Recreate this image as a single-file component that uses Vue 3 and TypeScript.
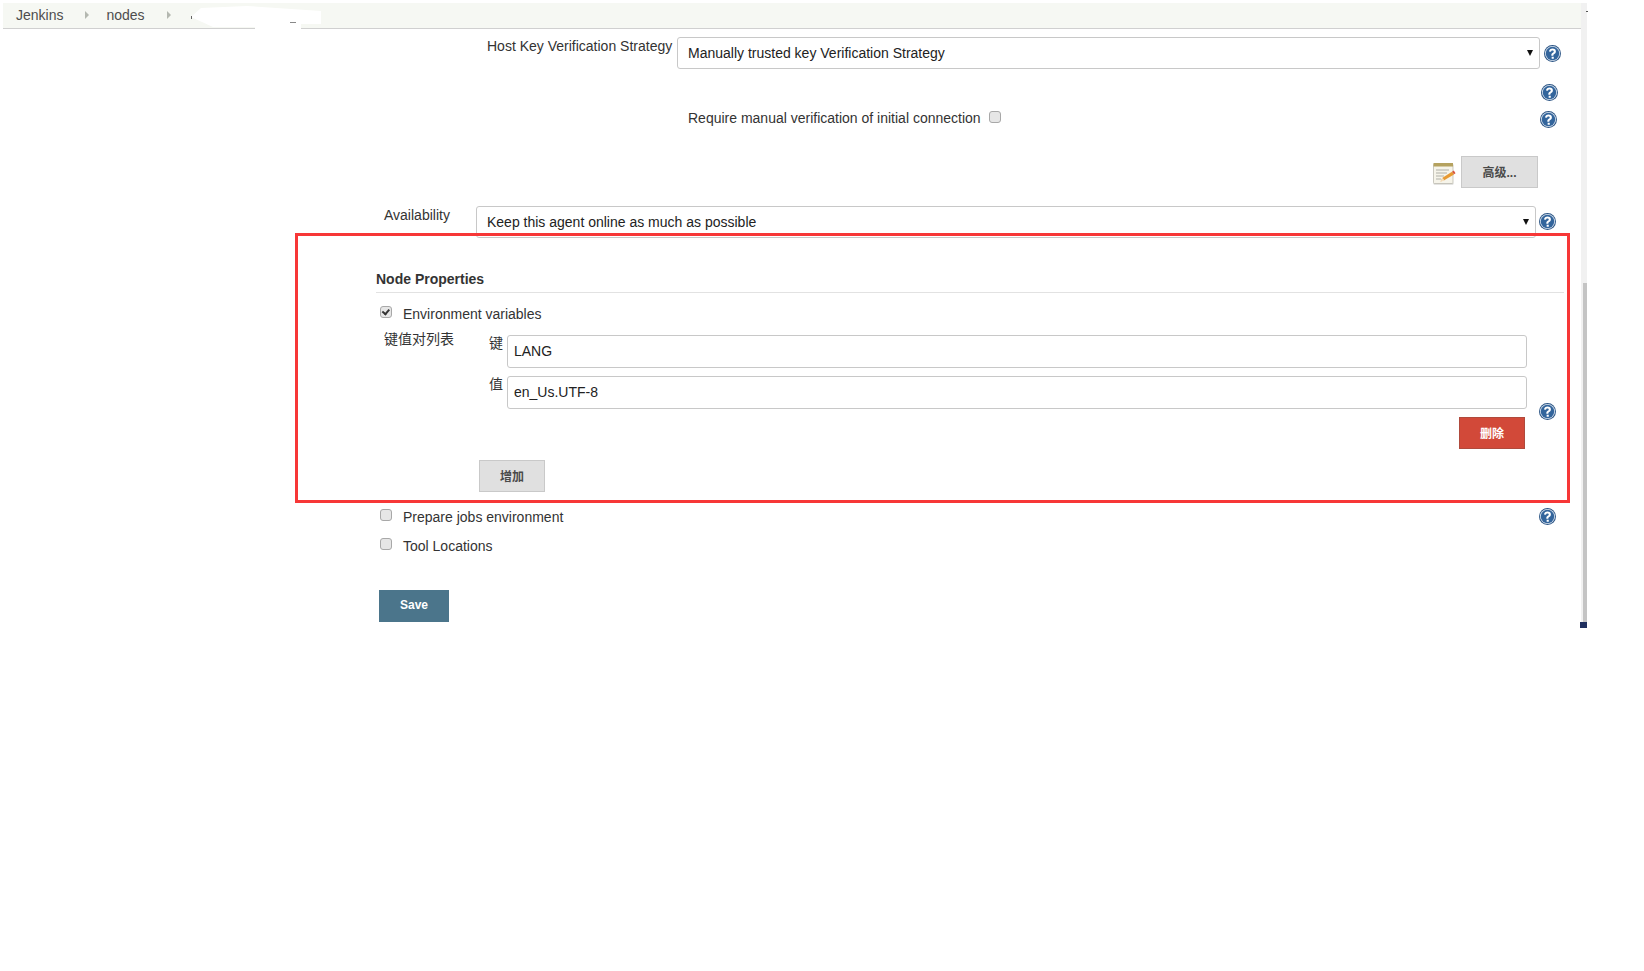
<script setup lang="ts">
const helpPath = 'M8.100 3.400c-1.900 0-3.200 1-3.400 2.700l1.900.2c.1-.8.600-1.200 1.400-1.200.7 0 1.200.4 1.200 1 0 .5-.3.8-1 1.300-.9.6-1.300 1.200-1.300 2.200v.5h1.900v-.3c0-.6.200-.9.900-1.400 1-.6 1.500-1.300 1.500-2.400 0-1.600-1.200-2.600-3.100-2.600zM7.200 11h2v1.900h-2z'
</script>

<template>
  <div class="page">
    <svg class="defs" aria-hidden="true">
      <symbol id="help-icon" viewBox="0 0 16 16">
        <circle cx="8" cy="8" r="8" fill="#2c5585" />
        <circle cx="8" cy="8" r="7.100" fill="#dce6f1" />
        <circle cx="8" cy="8" r="6.300" fill="#33659c" />
        <path :d="helpPath" fill="#fff" />
      </symbol>
    </svg>

    <nav class="crumbs">
      <span class="crumb">Jenkins</span>
      <i class="arrow first"></i>
      <span class="crumb">nodes</span>
      <i class="arrow"></i>
      <svg class="redacted" viewBox="0 0 140 30">
        <path d="M4 14L14 5 60 3 134 8V21H114V30H68V24H26z" fill="#fff" />
      </svg>
      <i class="tick"></i>
      <i class="tick second"></i>
    </nav>

    <main class="form">
      <div class="row host">
        <label class="host-label">Host Key Verification Strategy</label>
        <div class="select host-select">Manually trusted key Verification Strategy<i class="caret"></i></div>
        <svg class="help"><use href="#help-icon" /></svg>
      </div>
      <div class="row help-only">
        <svg class="help"><use href="#help-icon" /></svg>
      </div>
      <div class="row manual">
        <span class="manual-text">Require manual verification of initial connection</span>
        <i class="check"></i>
        <svg class="help"><use href="#help-icon" /></svg>
      </div>
      <div class="row advanced">
        <svg class="note" viewBox="0 0 24 24">
          <path d="M2 22.500h19l1-1H1z" fill="#c9c9c5" />
          <rect x="1.500" y="2" width="19.500" height="19.500" rx="1" fill="#f6f4ea" stroke="#b5b3a8" stroke-width=".7" />
          <rect x="1.500" y="1" width="19.500" height="3.500" fill="#b5a25f" />
          <path d="M4 8h13M4 11h11M4 14h8M4 17h5" stroke="#b0b0a8" stroke-width="1" />
          <path d="M8.500 19.500l2-3.800 9.500-6 2 2.800-9.800 5.700z" fill="#e79a33" />
          <path d="M8.500 19.500l2-3.800 2.200 3z" fill="#f4dfbd" />
          <path d="M20 9.700l1.800-1.100 1.700 2.700-1.500 1z" fill="#d8563c" />
        </svg>
        <button class="btn grey adv-btn">高级...</button>
      </div>
      <div class="row avail">
        <label class="avail-label">Availability</label>
        <div class="select avail-select">Keep this agent online as much as possible<i class="caret"></i></div>
        <svg class="help"><use href="#help-icon" /></svg>
      </div>

      <h3 class="section">Node Properties</h3>

      <div class="cb-row env"><i class="check checked"></i><span>Environment variables</span></div>

      <div class="kv">
        <div class="kv-title">键值对列表</div>
        <div class="kv-body">
          <div class="field"><label>键</label><div class="input">LANG</div></div>
          <div class="field"><label>值</label><div class="input">en_Us.UTF-8</div></div>
          <div class="del-row"><button class="btn red">删除</button></div>
          <button class="btn grey add-btn">增加</button>
        </div>
        <svg class="help kv-help"><use href="#help-icon" /></svg>
      </div>

      <div class="cb-row prep">
        <i class="check"></i><span>Prepare jobs environment</span>
        <svg class="help prep-help"><use href="#help-icon" /></svg>
      </div>
      <div class="cb-row tool"><i class="check"></i><span>Tool Locations</span></div>

      <button class="btn save">Save</button>
    </main>

    <div class="track"><div class="thumb"></div><div class="corner"></div></div>
    <div class="annotation"></div>
  </div>
</template>

<style>
html, body { margin: 0; background: #fff; }
</style>

<style scoped>
.page {
  position: relative;
  height: 971px;
  width: 1644px;
  overflow: hidden;
  font-family: "Liberation Sans", Arial, "Noto Sans CJK SC", sans-serif;
  font-size: 14px;
  color: #333;
  background: #fff;
}
.defs { position: absolute; width: 0; height: 0; }
.crumbs {
  position: relative;
  box-sizing: border-box;
  margin: 3px 0 0 3px;
  width: 1578px;
  height: 26px;
  display: flex;
  align-items: center;
  padding: 0 0 2px 13px;
  background: #f6f8f3;
  border-bottom: 1px solid #d0d0d0;
  color: #4d4d4d;
}
.crumb { line-height: 20px; }
.arrow {
  width: 0;
  height: 0;
  margin: 0 20px 0 22px;
  border-left: 4px solid #b4b8b0;
  border-top: 4px solid transparent;
  border-bottom: 4px solid transparent;
}
.arrow.first { margin-right: 17px; }
.redacted {
  position: absolute;
  left: 184px;
  top: 0;
  width: 140px;
  height: 30px;
}
.tick { position: absolute; left: 188px; top: 13px; width: 1px; height: 3px; background: #666; }
.tick.second { left: 287px; top: 19px; width: 6px; height: 1px; background: #888; }
.row { display: flex; align-items: flex-start; }
.select, .input {
  box-sizing: border-box;
  height: 32px;
  border: 1px solid #c8c8c8;
  border-radius: 3px;
  background: #fff;
  color: #222;
  line-height: 30px;
  position: relative;
}
.caret {
  position: absolute;
  right: 6px;
  top: 12px;
  width: 0;
  height: 0;
  border-top: 6px solid #111;
  border-left: 3.500px solid transparent;
  border-right: 3.500px solid transparent;
}
.help { width: 17px; height: 17px; flex: none; display: block; }
.host { height: 40px; margin-top: 8px; padding-left: 487px; }
.host-label { width: 185px; text-align: right; line-height: 18px; white-space: nowrap; }
.host-select { width: 863px; margin-left: 5px; padding-left: 10px; }
.host .help { margin: 8px 0 0 4px; }
.help-only { height: 17px; padding: 7px 0 0 1541px; }
.manual { height: 31px; padding-left: 688px; margin-top: 7px; }
.manual-text { line-height: 20px; width: 301px; white-space: nowrap; }
.check {
  box-sizing: border-box;
  width: 12px;
  height: 12px;
  flex: none;
  border: 1px solid #a8a8a8;
  border-radius: 3px;
  background: #e6e6e6;
  display: block;
  position: relative;
}
.manual .check { margin-top: 3px; }
.manual .help { margin: 3px 0 0 539px; }
.advanced { height: 32px; padding-left: 1432px; margin-top: 17px; align-items: center; }
.note { width: 24px; height: 24px; flex: none; margin-top: 3px; }
.btn {
  box-sizing: border-box;
  font-family: inherit;
  font-weight: 700;
  font-size: 12px;
  height: 32px;
  padding: 0 0 2px;
  border-radius: 0;
  display: block;
  text-align: center;
}
.grey { background: #e0e0e0; border: 1px solid #c9c9c9; color: #4a4a4a; }
.adv-btn { width: 77px; margin-left: 5px; }
.avail { margin-top: 18px; height: 32px; padding-left: 384px; }
.avail-label { width: 92px; line-height: 18px; }
.avail-select { width: 1060px; padding-left: 10px; }
.avail .help { margin: 7px 0 0 3px; }
.section {
  margin: 32px 0 0 376px;
  width: 1188px;
  height: 23px;
  box-sizing: border-box;
  border-bottom: 1px solid #e2e2e2;
  font-size: 14px;
  font-weight: 700;
  line-height: 18px;
  color: #333;
}
.cb-row { display: flex; padding-left: 380px; align-items: flex-start; }
.cb-row span { margin-left: 11px; line-height: 18px; }
.env { margin-top: 12px; height: 25px; }
.env .check { margin-top: 1px; }
.checked::after {
  content: "";
  position: absolute;
  left: 2px;
  top: 1px;
  width: 5px;
  height: 3px;
  border-left: 2px solid #333;
  border-bottom: 2px solid #333;
  transform: rotate(-50deg) translate(-1px, 0);
}
.kv { display: flex; align-items: flex-start; padding-left: 384px; position: relative; height: 171px; }
.kv-title { width: 105px; line-height: 18px; white-space: nowrap; }
.kv-body { width: 1038px; margin-top: 5px; }
.field { display: flex; margin-bottom: 8px; }
.field label { width: 18px; line-height: 18px; margin-top: -1px; }
.input { width: 1020px; height: 33px; line-height: 31px; padding-left: 6px; }
.kv-help { position: absolute; left: 1539px; top: 73px; }
.del-row { display: flex; justify-content: flex-end; padding-right: 2px; }
.red { width: 66px; background: #d24939; border: 1px solid #b04a3c; color: #fff; }
.add-btn { width: 66px; margin: 11px 0 0 -10px; }
.prep { margin-top: 7px; height: 29px; position: relative; }
.prep .check { margin-top: 1px; }
.prep-help { position: absolute; left: 1539px; top: 0; }
.tool { height: 18px; }
.tool .check { margin-top: 1px; }
.save {
  width: 70px;
  margin: 35px 0 0 379px;
  background: #4b758b;
  border: 1px solid #4b758b;
  color: #fff;
}
.track { position: absolute; left: 1581px; top: 3px; width: 6px; height: 625px; background: #f1f1f1; }
.track::before { content: ""; position: absolute; left: 5px; top: 8px; width: 2px; height: 1px; background: #555; }
.thumb { position: absolute; left: 2px; right: 0; top: 280px; bottom: 0; background: #c4c4c4; }
.corner { position: absolute; left: -1px; right: 0; bottom: 0; height: 6px; background: #1f2f5e; }
.annotation {
  position: absolute;
  left: 295px;
  top: 233px;
  width: 1275px;
  height: 270px;
  box-sizing: border-box;
  border: 3px solid #f73737;
  pointer-events: none;
}
</style>
